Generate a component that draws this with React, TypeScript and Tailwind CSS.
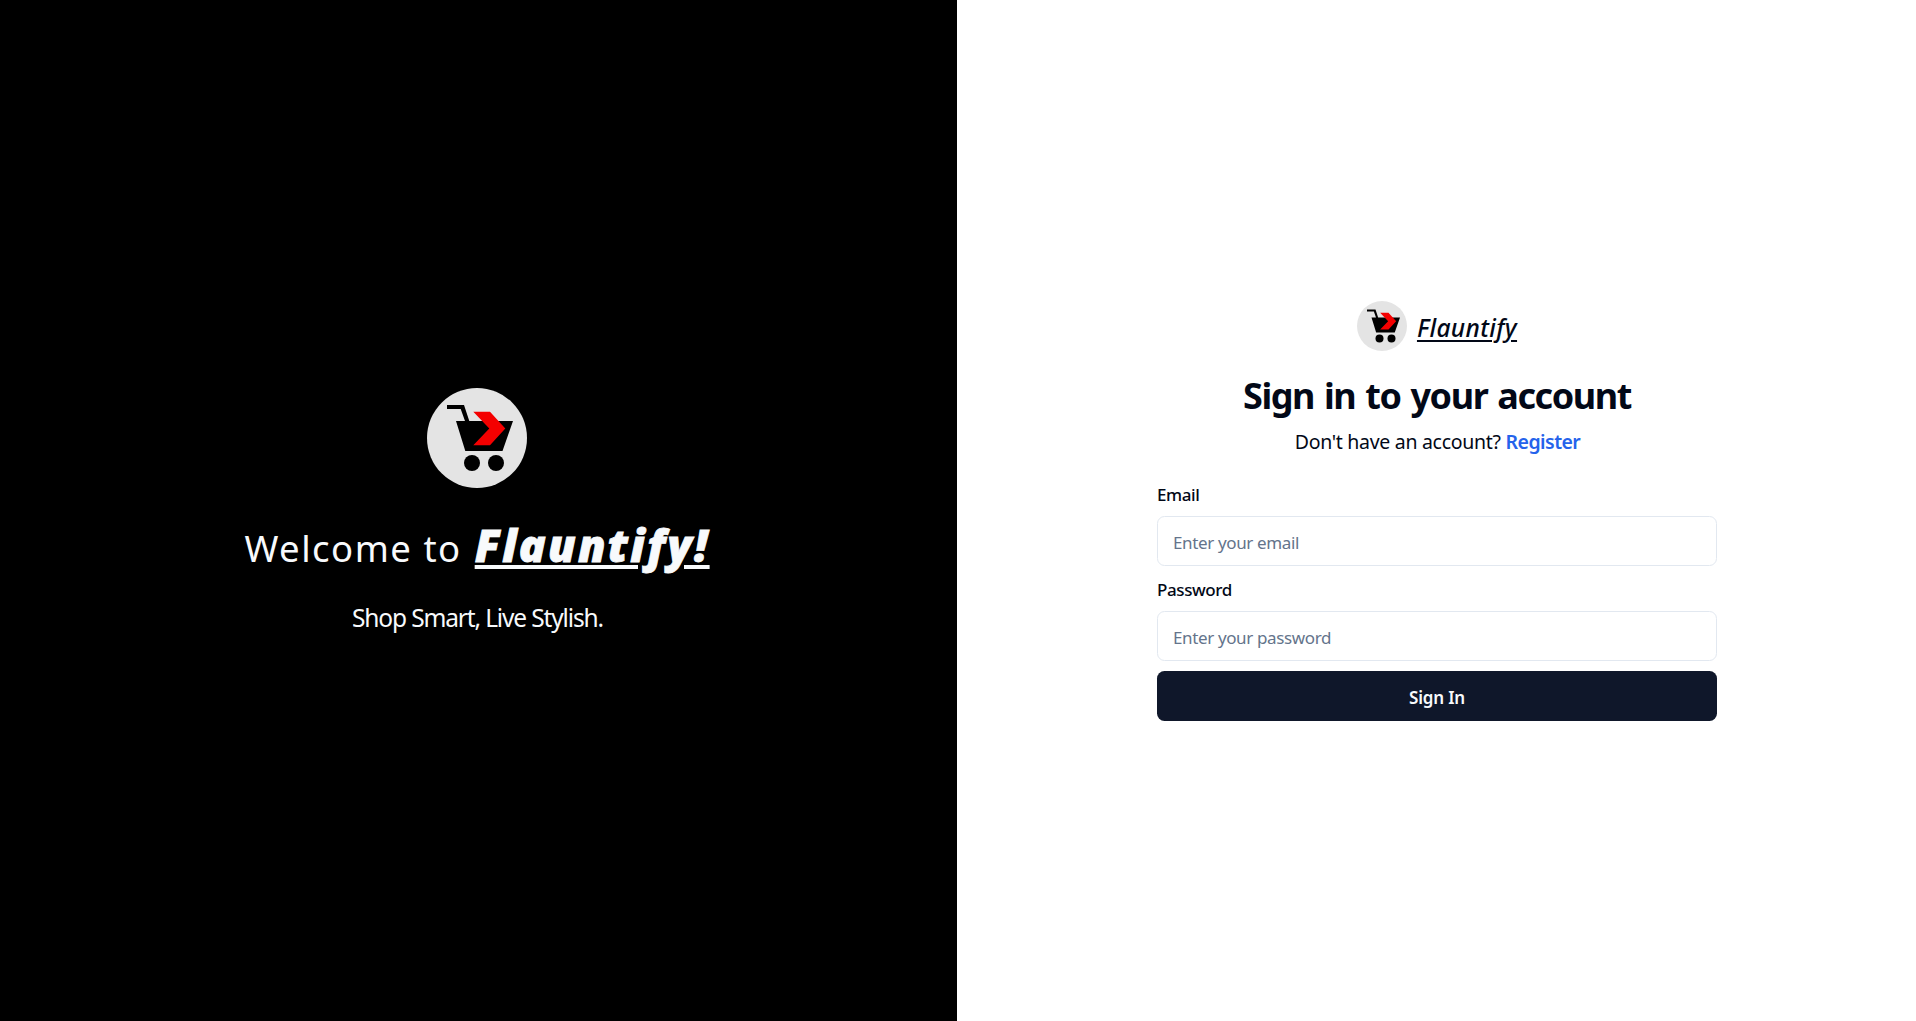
function Logo({ className }: { className: string }) {
  return (
    <svg viewBox="0 0 100 100" className={className} aria-hidden="true">
      <circle cx="50" cy="50" r="50" fill="#e4e4e4" />
      <path d="M20 17H37L42.3 33H86L75.5 63H38.3L29 33H38L33.7 21H20Z" fill="#000" />
      <path d="M46.3 23.7H63L78.3 40.4L63 57.2H46.3L62.3 40.4Z" fill="#f40000" />
      <circle cx="45" cy="75" r="8" fill="#000" />
      <circle cx="69" cy="75" r="8" fill="#000" />
    </svg>
  );
}

const inputClass =
  "mt-[11px] block h-[50px] w-full rounded-[7.5px] border border-[#e2e8f0] bg-white px-[15px] pt-0.5 text-[17px] text-[#020817] outline-none placeholder:text-[#64748b] placeholder:opacity-100";

export default function App() {
  return (
    <main className="flex h-screen w-full overflow-hidden bg-white font-['Noto_Sans',sans-serif]">
      <section className="flex w-[957px] flex-col items-center justify-center bg-black pr-[3px] text-[#f8fafc]">
        <Logo className="size-[100px]" />
        <h1 className="mt-8 flex items-baseline gap-[13px] leading-[50px] whitespace-nowrap">
          <span className="text-[36.5px] font-normal tracking-[1.5px]">Welcome to</span>
          <span className="text-[44.5px] font-black tracking-[2.2px] italic underline decoration-[4px] underline-offset-[3px] [-webkit-text-stroke:0.8px_#f8fafc]">
            Flauntify!
          </span>
        </h1>
        <p className="mt-[29px] pl-px text-[24.5px] leading-[32px] tracking-[-1.14px]">Shop Smart, Live Stylish.</p>
      </section>

      <section className="flex flex-1 flex-col items-center justify-center pt-px pl-px">
        <div className="w-[560px] text-[#020817]">
          <div className="flex items-center justify-center gap-2.5">
            <Logo className="size-[50px]" />
            <span className="pt-1 text-[24.5px] leading-[46px] font-medium tracking-[0.36px] italic underline decoration-2 underline-offset-[3px]">
              Flauntify
            </span>
          </div>
          <h2 className="mt-[22px] text-center text-[36px] leading-[45px] font-bold tracking-[-1.42px] [word-spacing:2px]">
            Sign in to your account
          </h2>
          <p className="mt-[9px] flex justify-center gap-[5px] pl-px text-[19.5px] leading-[30px]">
            <span className="tracking-[-0.3px]">Don't have an account?</span>
            <a href="#" className="font-semibold tracking-[-0.55px] text-[#2563eb]">
              Register
            </a>
          </p>
          <form className="mt-7">
            <label htmlFor="email" className="block text-[17px] leading-5 font-medium tracking-[-0.4px]">
              Email
            </label>
            <input id="email" type="email" placeholder="Enter your email" className={`${inputClass} tracking-[-0.36px]`} />
            <label htmlFor="password" className="mt-3.5 block text-[17px] leading-5 font-medium tracking-[-0.4px]">
              Password
            </label>
            <input id="password" type="password" placeholder="Enter your password" className={`${inputClass} tracking-[-0.37px]`} />
            <button
              type="button"
              className="mt-2.5 h-[50px] w-full rounded-[7.5px] bg-[#0f172a] pt-[3px] text-[17px] font-semibold tracking-[-0.17px] text-[#f8fafc]"
            >
              Sign In
            </button>
          </form>
        </div>
      </section>
    </main>
  );
}
